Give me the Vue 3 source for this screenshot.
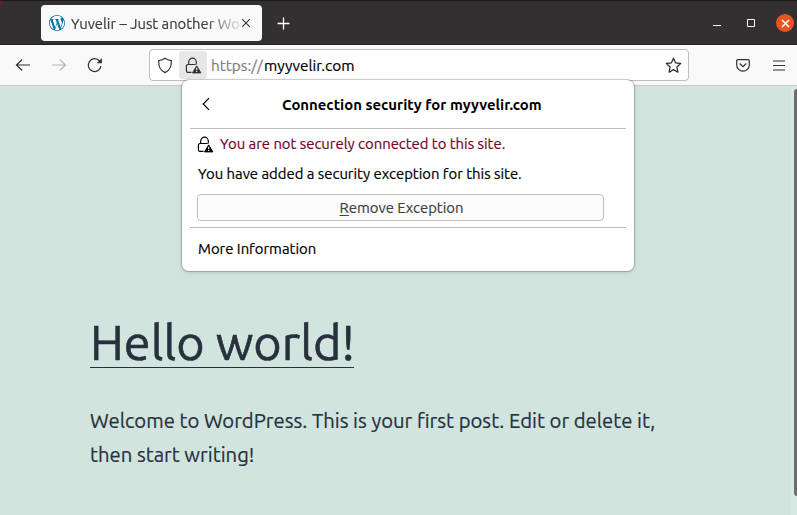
<script setup>
const windowTitle = 'Yuvelir – Just another Wo'
</script>

<template>
  <div class="browser">
    <header class="titlebar">
      <div class="tab">
        <svg class="wp" width="16" height="16" viewBox="0 0 24 24" aria-hidden="true">
          <circle cx="12" cy="12" r="12" fill="#fff" />
          <path fill="#0875a5" d="M21.47 6.825c.84 1.537 1.318 3.3 1.318 5.175 0 3.979-2.156 7.456-5.363 9.325l3.295-9.527c.615-1.54.82-2.771.82-3.864 0-.405-.026-.78-.07-1.11m-7.981.105c.647-.03 1.232-.105 1.232-.105.582-.075.514-.93-.067-.899 0 0-1.755.135-2.88.135-1.064 0-2.85-.15-2.85-.15-.585-.03-.661.855-.075.885 0 0 .54.061 1.125.09l1.68 4.605-2.37 7.08L5.354 6.9c.649-.03 1.234-.1 1.234-.1.585-.075.516-.93-.065-.896 0 0-1.746.138-2.874.138-.2 0-.438-.008-.69-.015C4.911 3.15 8.235 1.215 12 1.215c2.809 0 5.365 1.072 7.286 2.833-.046-.003-.091-.009-.141-.009-1.06 0-1.812.923-1.812 1.914 0 .89.513 1.643 1.06 2.531.411.72.89 1.643.89 2.977 0 .915-.354 1.994-.821 3.479l-1.075 3.585-3.9-11.61.002.015zM12 22.784c-1.059 0-2.081-.153-3.048-.437l3.237-9.406 3.315 9.087c.024.053.05.101.078.149-1.12.393-2.325.607-3.582.607M1.211 12c0-1.564.336-3.05.935-4.39L7.29 21.709C3.694 19.96 1.212 16.271 1.211 12M12 0C5.385 0 0 5.385 0 12s5.385 12 12 12 12-5.385 12-12S18.615 0 12 0" />
        </svg>
        <span class="tab-title">{{ windowTitle }}</span>
        <svg class="tab-close" width="10" height="10" viewBox="0 0 10 10"><path d="M1.2 1.2l7.6 7.6M8.8 1.2L1.2 8.8" /></svg>
      </div>
      <svg class="new-tab" width="13" height="13" viewBox="0 0 13 13"><path d="M6.5.5v12M.5 6.5h12" /></svg>
      <div class="controls">
        <svg width="8" height="10" viewBox="0 0 8 10"><path d="M0 7.5h8" /></svg>
        <svg class="maximize" width="8" height="8" viewBox="0 0 8 8"><path d="M.5.5h7v7h-7z" /></svg>
        <span class="close"><svg width="9" height="9" viewBox="0 0 9 9"><path d="M1 1l7 7M8 1L1 8" /></svg></span>
      </div>
    </header>

    <nav class="toolbar">
      <svg class="back" width="16" height="14" viewBox="0 0 16 14"><path d="M15 7H1.7M7.2 1.5L1.5 7l5.7 5.5" /></svg>
      <svg class="forward" width="16" height="14" viewBox="0 0 16 14"><path d="M1 7h13.3M8.8 1.5L14.5 7l-5.7 5.5" /></svg>
      <svg class="reload" width="16" height="16" viewBox="0 0 16 16">
        <path d="M14 9.1A6.4 6.4 0 1 1 12.6 4" /><path class="solid" d="M14.9 1v5.2H9.7z" />
      </svg>
      <div class="urlbar">
        <svg class="shield" width="16" height="17" viewBox="0 0 16 17"><path d="M8 1.2c1.7 1.3 3.9 2 6.3 2.4.3 5.5-1.4 9.9-6.3 12-4.9-2.1-6.6-6.5-6.3-12C4.1 3.2 6.3 2.5 8 1.2z" /></svg>
        <span class="identity">
          <svg class="lock" width="17" height="17" viewBox="0 0 17 17">
            <path d="M3.7 7.5V5a3.8 3.8 0 0 1 7.6 0v2.5M6.5 15.3H3a1.6 1.6 0 0 1-1.6-1.600V9.100A1.600 1.600 0 0 1 3 7.500h7.500" />
            <path class="warning" d="M11.700 8.900l4.200 7H7.500z" />
            <path class="mark" d="M11.700 10.700v2.600M11.700 14v1" />
          </svg>
        </span>
        <span class="scheme">https://</span><span class="host">myyvelir.com</span>
        <svg class="star" width="17" height="17" viewBox="0 0 17 17"><path d="M8.500 1.200l2.100 4.700 5.100.600-3.800 3.500 1 5.200-4.400-2.600-4.400 2.600 1-5.200L1.300 6.500l5.100-.600z" /></svg>
      </div>
      <svg class="pocket" width="14" height="13" viewBox="0 0 14 13"><path d="M1.900.700h10.200c.700 0 1.200.500 1.200 1.200v4A6.300 6.300 0 0 1 .700 5.900V1.900C.700 1.200 1.200.700 1.900.700z" /><path d="M3.700 4.500L7 7.700l3.300-3.200" /></svg>
      <svg class="menu" width="12" height="11" viewBox="0 0 12 11"><path d="M0 1h12M0 5.500h12M0 10h12" /></svg>
    </nav>

    <main class="page">
      <h1>Hello world!</h1>
      <p>Welcome to WordPress. This is your first post. Edit or delete it,<br />then start writing!</p>
      <div class="scroll-track"><div class="scroll-thumb"></div></div>
    </main>

    <section class="panel">
      <div class="panel-head">
        <svg class="chevron" width="8" height="14" viewBox="0 0 8 14"><path d="M7 1.200L1.200 7 7 12.800" /></svg>
        <h2>Connection security for myyvelir.com</h2>
      </div>
      <div class="panel-body">
        <div class="status">
          <svg class="lock" width="17" height="17" viewBox="0 0 17 17">
            <path d="M3.700 7.500V5a3.800 3.800 0 0 1 7.600 0v2.500M6.500 15.300H3a1.600 1.600 0 0 1-1.600-1.600V9.100A1.600 1.600 0 0 1 3 7.500h7.500" />
            <path class="warning" d="M11.700 8.900l4.200 7H7.500z" />
            <path class="mark" d="M11.700 10.700v2.600M11.700 14v1" />
          </svg>
          <span class="insecure">You are not securely connected to this site.</span>
        </div>
        <div class="exception">You have added a security exception for this site.</div>
        <button><span class="key">R</span>emove Exception</button>
      </div>
      <div class="more">More Information</div>
    </section>
  </div>
</template>

<style>
body { margin: 0; overflow: hidden; }
</style>

<style scoped>
.browser {
  position: relative;
  display: flex;
  flex-direction: column;
  width: 797px;
  height: 515px;
  overflow: hidden;
  font-family: Ubuntu, "Noto Sans", sans-serif;
  font-size: 14.870px;
  color: #000;
  white-space: nowrap;
  -webkit-text-stroke: 0.2px currentColor;
}
svg { display: block; flex: none; fill: none; stroke: currentColor; stroke-width: 1.200; overflow: visible; }
.titlebar {
  box-sizing: border-box;
  display: flex;
  align-items: center;
  height: 45px;
  padding: 2px 3px 1px 41px;
  background: linear-gradient(135deg, #8b1020 2px, #333031 3px);
  border-top: 1px solid #1c1a1b;
  border-bottom: 1px solid #242122;
  color: #fff;
}
.tab {
  box-sizing: border-box;
  display: flex;
  align-items: center;
  width: 221px;
  height: 36px;
  padding: 0 11px 0 8px;
  border-radius: 4px;
  background: #f9f9fa;
  color: #3c3c3e;
}
.wp { stroke: none; }
.tab-title {
  width: 169px;
  margin-left: 6px;
  font-size: 14.800px;
  mask-image: linear-gradient(to right, #000 132px, transparent 174px);
}
.tab-close { margin-left: 1px; stroke-width: 1.200; }
.new-tab { margin-left: 15px; stroke-width: 1.300; }
.controls { display: flex; align-items: center; margin-left: auto; }
.controls svg { stroke-width: 1; }
.controls .maximize { margin: 0 21px 0 26px; }
.close {
  display: grid;
  place-items: center;
  width: 18px;
  height: 18px;
  border-radius: 50%;
  background: #e95420;
}
.controls .close svg { stroke-width: 1.500; }
.toolbar {
  box-sizing: border-box;
  display: flex;
  align-items: center;
  height: 41px;
  padding: 0 12px 0 15px;
  background: #f9f9fa;
  border-bottom: 1px solid #c9c9ca;
  color: #303033;
}
.forward { margin-left: 20px; color: #b5b5b6; }
.reload { margin-left: 20px; }
.reload .solid { fill: currentColor; stroke: none; }
.urlbar {
  box-sizing: border-box;
  display: flex;
  align-items: center;
  width: 540px;
  height: 32px;
  margin-left: 46px;
  padding: 0 6px 0 7px;
  border: 1px solid #bdbdbe;
  border-radius: 4px;
  background: #fff;
  font-size: 15.350px;
}
.identity {
  display: grid;
  place-items: center;
  width: 28px;
  height: 28px;
  margin: 0 4px 0 6px;
  border-radius: 3px;
  background: #e7e7e8;
}
.lock .warning { fill: currentColor; stroke: currentColor; stroke-width: 1; stroke-linejoin: round; }
.lock .mark { stroke: #fff; stroke-width: 1.100; }
.scheme { width: 53px; color: #808082; }
.host { color: #000; }
.star { margin-left: auto; stroke-linejoin: round; stroke-width: 1.300; }
.pocket { margin-left: 47px; }
.menu { margin-left: auto; }
.page {
  position: relative;
  box-sizing: border-box;
  flex: 1;
  padding: 226px 90px 0;
  background: #d1e4dd;
  color: #28303d;
}
h1 {
  width: 264px;
  height: 55px;
  margin: 0;
  border-bottom: 1px solid #28303d;
  font-size: 48.600px;
  font-weight: 400;
  line-height: 60px;
  -webkit-text-stroke-width: 0.600px;
}
p { margin: 36px 0 0; font-size: 20.270px; line-height: 34px; }
.scroll-track { position: absolute; top: 0; right: 0; width: 6px; height: 100%; background: #d8e8e2; }
.scroll-thumb { width: 3px; height: 407px; margin: 3px 0 0 3px; border-radius: 3px 0 0 3px; background: #6d6d6e; }
.panel {
  position: absolute;
  top: 80px;
  left: 182px;
  box-sizing: border-box;
  width: 452px;
  height: 191px;
  padding: 0 8px;
  border-radius: 7px;
  background: #fff;
  box-shadow: 0 0 0 1px #00000028, 0 1px 4px #00000030;
}
.panel-head { display: flex; align-items: center; height: 48px; padding-left: 12px; border-bottom: 1px solid #bdbdbe; }
h2 { margin: 1px 0 0 72px; font-size: 14.900px; font-weight: 700; -webkit-text-stroke-width: 0; }
.panel-body { box-sizing: border-box; height: 99px; padding: 0 7px; border-bottom: 1px solid #bdbdbe; }
.status { display: flex; align-items: center; height: 30px; }
.insecure { margin-left: 6px; padding-bottom: 2px; color: #70062d; }
.exception { height: 30px; padding-left: 1px; line-height: 30px; }
button {
  display: block;
  box-sizing: border-box;
  width: 407px;
  height: 27px;
  margin: 5px 0 0;
  padding: 0 0 1px 2px;
  border: 1px solid #bfbfc0;
  border-radius: 4px;
  background: #fcfcfc;
  color: #414143;
  font: inherit;
  -webkit-text-stroke: inherit;
}
.key { text-decoration: underline; text-decoration-thickness: 1px; text-underline-offset: 2px; }
.more { padding: 0 8px; line-height: 42px; }
</style>
